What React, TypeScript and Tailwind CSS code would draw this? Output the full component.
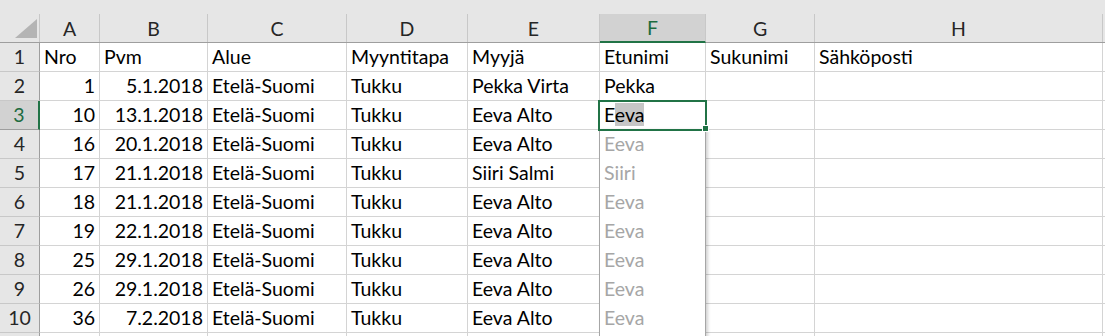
import React from "react";

const cols = [
  { key: "A", w: "w-[60px]" },
  { key: "B", w: "w-[108px]" },
  { key: "C", w: "w-[139px]" },
  { key: "D", w: "w-[121px]" },
  { key: "E", w: "w-[132px]" },
  { key: "F", w: "w-[106px]" },
  { key: "G", w: "w-[109px]" },
  { key: "H", w: "w-[288px]" },
];

type Row = {
  n: number | null;
  cells: string[];
};

const rows: Row[] = [
  { n: 1, cells: ["Nro", "Pvm", "Alue", "Myyntitapa", "Myyjä", "Etunimi", "Sukunimi", "Sähköposti"] },
  { n: 2, cells: ["1", "5.1.2018", "Etelä-Suomi", "Tukku", "Pekka Virta", "Pekka", "", ""] },
  { n: 3, cells: ["10", "13.1.2018", "Etelä-Suomi", "Tukku", "Eeva Alto", "", "", ""] },
  { n: 4, cells: ["16", "20.1.2018", "Etelä-Suomi", "Tukku", "Eeva Alto", "Eeva", "", ""] },
  { n: 5, cells: ["17", "21.1.2018", "Etelä-Suomi", "Tukku", "Siiri Salmi", "Siiri", "", ""] },
  { n: 6, cells: ["18", "21.1.2018", "Etelä-Suomi", "Tukku", "Eeva Alto", "Eeva", "", ""] },
  { n: 7, cells: ["19", "22.1.2018", "Etelä-Suomi", "Tukku", "Eeva Alto", "Eeva", "", ""] },
  { n: 8, cells: ["25", "29.1.2018", "Etelä-Suomi", "Tukku", "Eeva Alto", "Eeva", "", ""] },
  { n: 9, cells: ["26", "29.1.2018", "Etelä-Suomi", "Tukku", "Eeva Alto", "Eeva", "", ""] },
  { n: 10, cells: ["36", "7.2.2018", "Etelä-Suomi", "Tukku", "Eeva Alto", "Eeva", "", ""] },
  { n: null, cells: ["", "", "", "", "", "", "", ""] },
];

export default function App() {
  return (
    <div
      className="relative w-[1105px] h-[336px] overflow-hidden bg-white text-[19.5px] text-[#000]"
      style={{ fontFamily: "Lato, 'Noto Sans', sans-serif" }}
    >
      {/* top strip */}
      <div className="h-[14px] bg-[#e6e6e6]" />
      {/* column header row */}
      <div className="flex h-[29px] bg-[#e6e6e6] border-b border-[#9e9e9e]">
        <div className="relative w-[40px] shrink-0 border-r border-[#c8c8c8]">
          <svg className="absolute left-[15px] top-[5px]" width="22" height="19" viewBox="0 0 22 19">
            <polygon points="22,0 22,19 0,19" fill="#b4b4b4" />
          </svg>
        </div>
        {cols.map((c) => {
          const sel = c.key === "F";
          return (
            <div
              key={c.key}
              className={`${c.w} shrink-0 flex items-end justify-center pb-[2px] leading-[22px] border-r border-[#c8c8c8] ${
                sel ? "bg-[#d2d2d2] text-[#1d6b3f] border-b-2 border-b-[#217346] -mb-[1px]" : "text-[#262626]"
              }`}
            >
              {c.key}
            </div>
          );
        })}
        <div className="flex-1" />
      </div>
      {rows.map((r, idx) => {
        const selRow = r.n === 3;
        return (
          <div key={idx} className="flex h-[29px]">
            <div
              className={`w-[40px] shrink-0 flex items-end justify-center pb-[3px] leading-[22px] border-b ${
                selRow
                  ? "bg-[#d2d2d2] text-[#1d6b3f] border-r-2 border-r-[#217346] border-b-[#9e9e9e]"
                  : "bg-[#e6e6e6] text-[#262626] border-r border-r-[#9e9e9e] border-b-[#c8c8c8]"
              }`}
            >
              {r.n ?? ""}
            </div>
            {cols.map((c, i) => {
              const v = r.cells[i];
              const numeric = r.n !== 1 && (i === 0 || i === 1);
              const preview = c.key === "F" && (r.n === null || r.n >= 4);
              return (
                <div
                  key={c.key}
                  className={`${c.w} shrink-0 flex items-end pb-[3px] px-[4px] leading-[22px] whitespace-nowrap overflow-visible border-r border-b border-[#d4d4d4] ${
                    numeric ? "justify-end" : "justify-start"
                  } ${preview ? "border-b-white text-[#a6a6a6]" : ""}`}
                >
                  {c.key === "F" && r.n === 3 ? (
                    <span>
                      E<span className="bg-[#c6c6c6]">eva</span>
                    </span>
                  ) : (
                    v
                  )}
                </div>
              );
            })}
            <div className="flex-1 border-b border-[#d4d4d4]" />
          </div>
        );
      })}
      {/* flash fill preview box */}
      <div className="pointer-events-none absolute left-[599px] top-[130px] w-[107px] h-[220px] border-l border-r border-[#a6a6a6] shadow-[2px_0_3px_rgba(0,0,0,0.18)]" />
      {/* selected cell */}
      <div className="pointer-events-none absolute left-[598px] top-[100px] w-[109px] h-[31px] border-2 border-[#217346]" />
      <div className="pointer-events-none absolute left-[702px] top-[125px] w-[7px] h-[7px] bg-[#217346] border border-white" />
    </div>
  );
}
